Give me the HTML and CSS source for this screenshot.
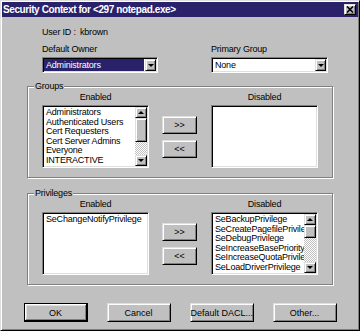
FILE: index.html
```html
<!DOCTYPE html>
<html lang="en">
<head>
    <meta charset="UTF-8">
    <title>Security Context</title>
    <link rel="stylesheet" href="styles.css">
</head>
<body>
    <div class="window">
        <div class="titlebar">
            <span class="title">Security Context for &lt;297 notepad.exe&gt;</span>
            <span class="close raised">
                <svg width="8" height="7" viewBox="0 0 8 7"><path d="M1 0.5 L7 6.5 M7 0.5 L1 6.5" stroke="#000" stroke-width="1.6"/></svg>
            </span>
        </div>

        <div class="content">
            <div class="userid">
                <span class="userid-label">User ID :</span>
                <span>kbrown</span>
            </div>

            <div class="owners">
                <div class="field owner">
                    <label>Default Owner</label>
                    <div class="combo">
                        <span class="combo-value selected">Administrators</span>
                        <span class="combo-arrow raised"><i class="tri-down"></i></span>
                    </div>
                </div>
                <div class="field group-field">
                    <label>Primary Group</label>
                    <div class="combo">
                        <span class="combo-value">None</span>
                        <span class="combo-arrow raised"><i class="tri-down"></i></span>
                    </div>
                </div>
            </div>

            <fieldset class="group">
                <legend>Groups</legend>
                <div class="transfer">
                    <div class="col-label">Enabled</div>
                    <div></div>
                    <div class="col-label">Disabled</div>

                    <div class="list">
                        <ul>
                            <li>Administrators</li>
                            <li>Authenticated Users</li>
                            <li>Cert Requesters</li>
                            <li>Cert Server Admins</li>
                            <li>Everyone</li>
                            <li>INTERACTIVE</li>
                        </ul>
                        <div class="scrollbar">
                            <span class="sb-btn raised"><i class="tri-up"></i></span>
                            <span class="sb-track"><span class="sb-thumb raised thumb-big"></span></span>
                            <span class="sb-btn raised"><i class="tri-down"></i></span>
                        </div>
                    </div>
                    <div class="move-buttons">
                        <button class="btn raised">&gt;&gt;</button>
                        <button class="btn raised">&lt;&lt;</button>
                    </div>
                    <div class="list">
                        <ul></ul>
                    </div>
                </div>
            </fieldset>

            <fieldset class="group">
                <legend>Privileges</legend>
                <div class="transfer">
                    <div class="col-label">Enabled</div>
                    <div></div>
                    <div class="col-label">Disabled</div>

                    <div class="list">
                        <ul>
                            <li>SeChangeNotifyPrivilege</li>
                        </ul>
                    </div>
                    <div class="move-buttons">
                        <button class="btn raised">&gt;&gt;</button>
                        <button class="btn raised">&lt;&lt;</button>
                    </div>
                    <div class="list">
                        <ul>
                            <li>SeBackupPrivilege</li>
                            <li>SeCreatePagefilePrivilege</li>
                            <li>SeDebugPrivilege</li>
                            <li>SeIncreaseBasePriorityPrivilege</li>
                            <li>SeIncreaseQuotaPrivilege</li>
                            <li>SeLoadDriverPrivilege</li>
                        </ul>
                        <div class="scrollbar">
                            <span class="sb-btn raised"><i class="tri-up"></i></span>
                            <span class="sb-track"><span class="sb-thumb raised thumb-small"></span></span>
                            <span class="sb-btn raised"><i class="tri-down"></i></span>
                        </div>
                    </div>
                </div>
            </fieldset>

            <div class="actions">
                <button class="btn raised action default">OK</button>
                <button class="btn raised action">Cancel</button>
                <button class="btn raised action">Default DACL...</button>
                <button class="btn raised action">Other...</button>
            </div>
        </div>
    </div>
</body>
</html>
```

FILE: styles.css
```css
html, body {
    margin: 0;
    padding: 0;
}
body {
    background: #c0c0c0;
    font-family: "Liberation Sans", Arial, sans-serif;
    font-size: 9px;
    letter-spacing: -0.2px;
    color: #000;
}
.window {
    width: 360px;
    height: 331px;
    box-sizing: border-box;
    background: #c0c0c0;
    border: 1px solid;
    border-color: #dfdfdf #000 #000 #dfdfdf;
    padding: 1px;
    box-shadow: inset 1px 1px #fff, inset -1px -1px #808080;
}
.raised {
    background: #c0c0c0;
    border: 1px solid;
    border-color: #dfdfdf #000 #000 #dfdfdf;
    box-shadow: inset 1px 1px #fff, inset -1px -1px #808080;
    box-sizing: border-box;
}
.titlebar {
    height: 15px;
    background: #29226b;
    display: flex;
    align-items: center;
    justify-content: space-between;
    padding: 0 2px 0 1px;
}
.title {
    color: #fff;
    font-weight: bold;
    font-size: 10px;
    letter-spacing: -0.4px;
    line-height: 15px;
    white-space: nowrap;
}
.close {
    width: 12px;
    height: 11px;
    display: flex;
    align-items: center;
    justify-content: center;
}
.content {
    padding: 0 25px;
}
.userid {
    display: flex;
    margin: 9px 0 0 15px;
    line-height: 12px;
    white-space: nowrap;
}
.userid-label {
    width: 38px;
}
.owners {
    display: flex;
    gap: 53px;
    margin: 5px 0 0 15px;
}
.field label {
    display: block;
    line-height: 12px;
    margin-bottom: 2px;
    white-space: nowrap;
}
.owner {
    width: 116px;
}
.group-field {
    width: 117px;
}
.combo {
    height: 16px;
    box-sizing: border-box;
    background: #fff;
    border: 1px solid;
    border-color: #808080 #fff #fff #808080;
    box-shadow: inset 1px 1px #000, inset -1px -1px #dfdfdf;
    padding: 1px;
    display: flex;
}
.combo-value {
    flex: 1;
    line-height: 12px;
    padding-left: 2px;
    margin-right: 1px;
}
.combo-value.selected {
    background: #29226b;
    color: #fff;
}
.combo-arrow {
    width: 11px;
    height: 12px;
    display: flex;
    align-items: center;
    justify-content: center;
}
.tri-down, .tri-up {
    display: block;
    width: 0;
    height: 0;
    border-left: 3px solid transparent;
    border-right: 3px solid transparent;
}
.tri-down {
    border-top: 3px solid #000;
}
.tri-up {
    border-bottom: 3px solid #000;
}
.group {
    margin: 8px 0 0;
    padding: 0 14px 9px;
    border: 1px solid #808080;
    box-shadow: 1px 1px #fff, inset 1px 1px #fff;
    min-inline-size: 0;
}
.group + .group {
    margin-top: 10px;
}
.group legend {
    margin-left: -8px;
    padding: 0 1px;
    line-height: 10px;
    background: #c0c0c0;
}
.transfer {
    display: grid;
    grid-template-columns: 107px 36px 107px;
    column-gap: 13px;
}
.col-label {
    text-align: center;
    line-height: 12px;
    margin-bottom: 2px;
}
.list {
    height: 63px;
    box-sizing: border-box;
    background: #fff;
    border: 1px solid;
    border-color: #808080 #fff #fff #808080;
    box-shadow: inset 1px 1px #000, inset -1px -1px #dfdfdf;
    padding: 1px;
    display: flex;
    overflow: hidden;
}
.list ul {
    flex: 1;
    min-width: 0;
    margin: 0;
    padding: 1px 0 0 2px;
    list-style: none;
    line-height: 9.6px;
    white-space: nowrap;
    overflow: hidden;
}
.scrollbar {
    width: 12px;
    flex: none;
    display: flex;
    flex-direction: column;
}
.sb-btn {
    height: 11px;
    display: flex;
    align-items: center;
    justify-content: center;
}
.sb-track {
    flex: 1;
    background: repeating-conic-gradient(#c0c0c0 0 25%, #fff 0 50%) 0 0 / 2px 2px;
}
.sb-thumb {
    display: block;
}
.thumb-big {
    height: 24px;
}
.thumb-small {
    height: 13px;
}
.move-buttons {
    display: flex;
    flex-direction: column;
    justify-content: center;
    gap: 6px;
}
.btn {
    font: inherit;
    color: #000;
    padding: 0;
    width: 35px;
    height: 18px;
    line-height: 14px;
    white-space: nowrap;
}
.actions {
    display: flex;
    justify-content: center;
    gap: 19px;
    margin: 18px -25px 0;
}
.btn.action {
    flex: none;
    width: 64px;
    height: 19px;
}
.btn.default {
    border-color: #000;
    box-shadow: inset -1px -1px #000, inset 1px 1px #fff, inset -2px -2px #808080, inset 2px 2px #dfdfdf;
}
```
